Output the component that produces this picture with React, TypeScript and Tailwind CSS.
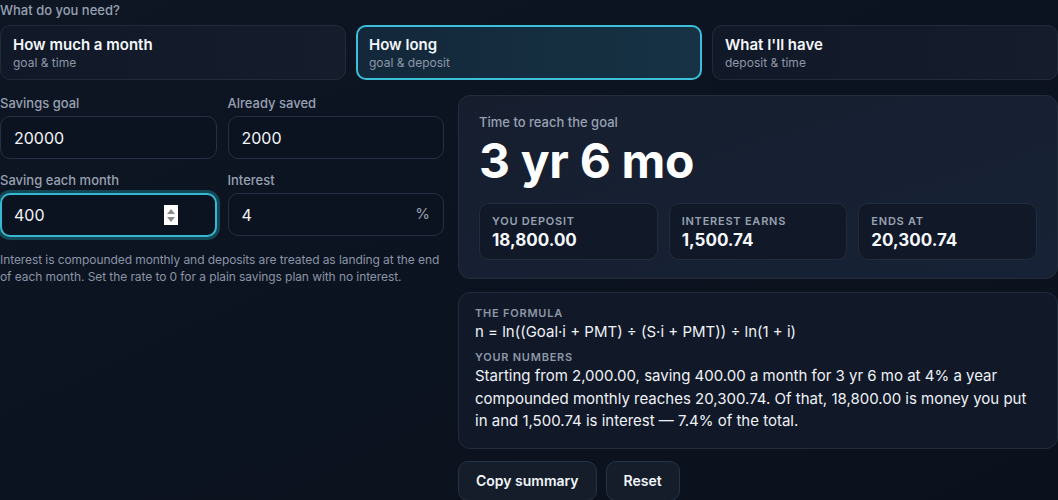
const modes = [
  { title: 'How much a month', sub: 'goal & time' },
  { title: 'How long', sub: 'goal & deposit', active: true },
  { title: "What I'll have", sub: 'deposit & time' },
]

const stats = [
  { label: 'You deposit', value: '18,800.00' },
  { label: 'Interest earns', value: '1,500.74' },
  { label: 'Ends at', value: '20,300.74' },
]

function Field({ label, value, suffix, focused }: { label: string; value: string; suffix?: string; focused?: boolean }) {
  return (
    <div className="flex flex-col">
      <label className="text-[13px] leading-4 font-medium text-[#97a1b2]">{label}</label>
      <div
        className={
          focused
            ? 'relative mt-[5px] h-[44px] flex items-center rounded-[10px] border-2 border-[#35b8d2] ring-[3px] ring-[#1b6a7c]/60 bg-[#0c1320] px-[12px]'
            : 'relative mt-[5px] h-[43px] flex items-center rounded-[10px] border border-[#253044] bg-[#0c1320] px-[13px]'
        }
      >
        <span className="text-[16px] text-[#f1f5f9]">{value}</span>
        {focused && (
          <span className="absolute right-[37px] top-[10px] w-[14px] h-[20px] bg-white flex flex-col items-center justify-center gap-[3px]">
            <svg width="8" height="5" viewBox="0 0 8 5"><path d="M4 0 L8 5 L0 5 Z" fill="#8a8a8a" /></svg>
            <svg width="8" height="5" viewBox="0 0 8 5"><path d="M0 0 L8 0 L4 5 Z" fill="#8a8a8a" /></svg>
          </span>
        )}
        {suffix && <span className="ml-auto text-[15px] text-[#97a1b2]">{suffix}</span>}
      </div>
    </div>
  )
}

export default function App() {
  return (
    <div className="min-h-screen bg-gradient-to-br from-[#0e1523] via-[#0c1320] to-[#0b111c] text-[#f1f5f9] font-['Inter',sans-serif]">
      <p className="text-[13px] leading-5 font-medium text-[#97a1b2]">What do you need?</p>

      <div className="mt-[5px] grid grid-cols-3 gap-[10px]">
        {modes.map((m) => (
          <button
            key={m.title}
            className={
              m.active
                ? 'h-[55px] rounded-[10px] border-2 border-[#3cbfd9] bg-gradient-to-r from-[#13283a] to-[#163244] px-[11px] text-left flex flex-col justify-center'
                : 'h-[55px] rounded-[10px] border border-[#222b3b] bg-gradient-to-r from-[#111827] to-[#151d2c] px-[12px] text-left flex flex-col justify-center'
            }
          >
            <span className="text-[15px] leading-5 font-semibold text-[#f4f7fb]">{m.title}</span>
            <span className="text-[12px] leading-4 text-[#8d97a8]">{m.sub}</span>
          </button>
        ))}
      </div>

      <div className="mt-[15px] grid grid-cols-[444px_1fr] gap-[14px]">
        <div>
          <div className="grid grid-cols-2 gap-x-[11px] gap-y-[13px]">
            <Field label="Savings goal" value="20000" />
            <Field label="Already saved" value="2000" />
            <Field label="Saving each month" value="400" focused />
            <Field label="Interest" value="4" suffix="%" />
          </div>
          <p className="mt-[14px] text-[12px] leading-[17px] tracking-[-0.08px] text-[#8a94a6]">
            Interest is compounded monthly and deposits are treated as landing at the end of each month. Set the rate to 0 for a plain savings plan with no interest.
          </p>
        </div>

        <div>
          <div className="rounded-[12px] border border-[#222c3d] bg-gradient-to-br from-[#161e2e] to-[#172236] px-[20px] pt-[18px] pb-[18px]">
            <p className="text-[13px] leading-4 font-medium text-[#97a1b2]">Time to reach the goal</p>
            <p className="mt-[5px] text-[48px] leading-[52px] font-bold tracking-[-0.3px] text-white">3 yr 6 mo</p>
            <div className="mt-[16px] grid grid-cols-3 gap-[11px]">
              {stats.map((s) => (
                <div key={s.label} className="h-[57px] rounded-[10px] border border-[#222c3d] bg-[#111827] px-[12px] flex flex-col justify-center">
                  <span className="text-[11px] leading-4 font-semibold uppercase tracking-[0.07em] text-[#97a1b2]">{s.label}</span>
                  <span className="text-[17px] leading-[22px] font-bold text-[#f4f7fb]">{s.value}</span>
                </div>
              ))}
            </div>
          </div>

          <div className="mt-[13px] rounded-[12px] border border-[#222c3d] bg-[#111827] px-[16px] pt-[13px] pb-[15px]">
            <p className="text-[11px] leading-[14px] font-semibold uppercase tracking-[0.07em] text-[#8d97a8]">The formula</p>
            <p className="mt-[1px] text-[15px] leading-[22px] text-[#eef2f7]">n = ln((Goal·i + PMT) ÷ (S·i + PMT)) ÷ ln(1 + i)</p>
            <p className="mt-[7px] text-[11px] leading-[14px] font-semibold uppercase tracking-[0.07em] text-[#8d97a8]">Your numbers</p>
            <p className="mt-[1px] text-[15px] leading-[22.5px] text-[#eef2f7]">
              Starting from 2,000.00, saving 400.00 a month for 3 yr 6 mo at 4% a year compounded monthly reaches 20,300.74. Of that, 18,800.00 is money you put in and 1,500.74 is interest — 7.4% of the total.
            </p>
          </div>

          <div className="mt-[12px] flex gap-[9px]">
            <button className="h-[40px] rounded-[10px] border border-[#263245] bg-[#151d2b] px-[17px] text-[14px] font-semibold text-[#f1f5f9]">Copy summary</button>
            <button className="h-[40px] rounded-[10px] border border-[#263245] bg-[#151d2b] px-[17px] text-[14px] font-semibold text-[#f1f5f9]">Reset</button>
          </div>
        </div>
      </div>
    </div>
  )
}
